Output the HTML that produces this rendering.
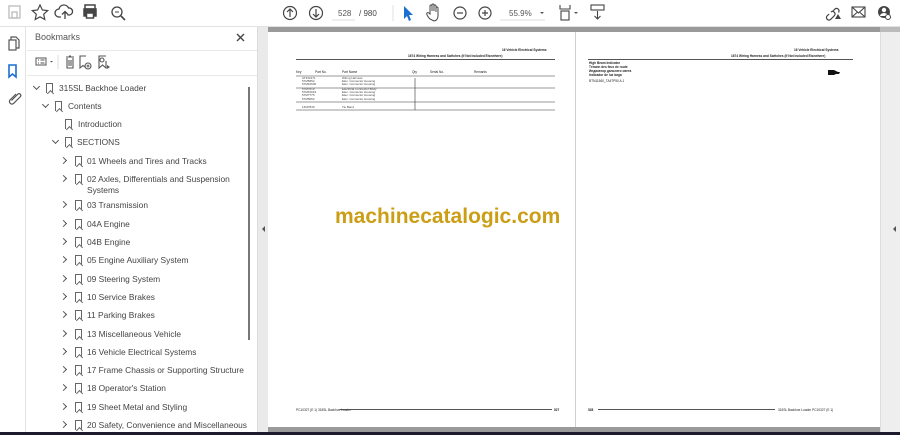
<!DOCTYPE html>
<html><head><meta charset="utf-8"><style>
*{margin:0;padding:0;box-sizing:border-box}
body{width:900px;height:435px;overflow:hidden;background:#fff;font-family:"Liberation Sans",sans-serif;position:relative;color:#333}
.a{position:absolute}
.tb{left:0;top:0;width:900px;height:27px;background:#fff;border-bottom:1px solid #e2e2e2}
.row{position:absolute;font-size:8.4px;color:#444;white-space:nowrap;line-height:10px}
.cr,.cd{position:absolute;width:5px;height:5px;border-right:1.2px solid #555;border-bottom:1.2px solid #555}
.cr{transform:rotate(-45deg)}
.cd{transform:rotate(45deg)}
.bm{position:absolute;width:7px;height:10px;border:1.2px solid #666;border-bottom:none}
.bm:after{content:"";position:absolute;left:0.5px;bottom:-3px;width:4px;height:4px;border-left:1.2px solid #666;border-top:1.2px solid #666;transform:rotate(45deg);background:#fff}
.t{position:absolute;font-size:3.2px;color:#222;white-space:nowrap;font-weight:bold}
</style></head><body>
<div class="a tb"></div>
<svg class="a" style="left:0;top:0" width="900" height="27">
<g fill="none" stroke="#bbb" stroke-width="1.3"><rect x="9" y="6" width="11" height="12"/><rect x="12" y="12" width="5" height="6"/></g>
<path d="M40 5l2.4 5 5.3.6-4 3.6 1.1 5.3-4.8-2.7-4.8 2.7 1.1-5.3-4-3.6 5.3-.6z" fill="none" stroke="#444" stroke-width="1.2"/>
<path d="M61 17h-2a4 4 0 0 1 0-8 5 5 0 0 1 9.5-1 3.5 3.5 0 0 1 1 7h-2M65 19v-7M62 14.5l3-3 3 3" fill="none" stroke="#444" stroke-width="1.3"/>
<g fill="none" stroke="#444" stroke-width="1.5"><rect x="85" y="5" width="10" height="4"/><rect x="84" y="9" width="12" height="7" fill="#444"/><rect x="86.5" y="13" width="7" height="5" fill="#fff"/></g>
<circle cx="117" cy="12" r="5" fill="none" stroke="#444" stroke-width="1.3"/><path d="M121 16l4 4" stroke="#444" stroke-width="1.6"/><path d="M115 12h4" stroke="#444"/>
<circle cx="290" cy="13" r="6.5" fill="none" stroke="#444" stroke-width="1.2"/><path d="M290 17v-8M287 12l3-3 3 3" fill="none" stroke="#444" stroke-width="1.2"/>
<circle cx="316" cy="13" r="6.5" fill="none" stroke="#444" stroke-width="1.2"/><path d="M316 9v8M313 14l3 3 3-3" fill="none" stroke="#444" stroke-width="1.2"/>
<path d="M332 20h23" stroke="#ddd"/>
<text x="338" y="16" font-size="8" fill="#555" font-family="Liberation Sans">528</text>
<text x="359" y="16" font-size="8" fill="#444" font-family="Liberation Sans">/ 980</text>
<path d="M393 5v16" stroke="#e0e0e0"/>
<path d="M404 6v13l3-3 2 5 2-1-2-5h4z" fill="#1a6fd1"/>
<path d="M430 19c-2-2-4-5-3-6s2 0 3 1v-8a1 1 0 0 1 2 0v5-6a1 1 0 0 1 2 0v6-5a1 1 0 0 1 2 0v6-4a1 1 0 0 1 2 0v8c0 3-2 5-4 5z" fill="none" stroke="#444" stroke-width="1"/>
<circle cx="460" cy="13" r="6" fill="none" stroke="#444" stroke-width="1.2"/><path d="M457 13h6" stroke="#444" stroke-width="1.2"/>
<circle cx="485" cy="13" r="6" fill="none" stroke="#444" stroke-width="1.2"/><path d="M482 13h6M485 10v6" stroke="#444" stroke-width="1.2"/>
<text x="509" y="16" font-size="8" fill="#555" font-family="Liberation Sans">55.9%</text>
<path d="M540 12l2 2 2-2z" fill="#555"/><path d="M500 20h45" stroke="#ddd"/>
<g fill="none" stroke="#444" stroke-width="1.1"><path d="M560 5v4h10V5"/><rect x="561" y="11" width="8" height="9"/></g><path d="M574 12l2 2 2-2z" fill="#555"/>
<g fill="none" stroke="#444" stroke-width="1.1"><rect x="591" y="5" width="13" height="5"/><path d="M597.5 11v8M594.5 16l3 3 3-3"/></g>
<g fill="none" stroke="#444" stroke-width="1.2"><path d="M829 14l-2 2a2.5 2.5 0 0 0 3.5 3.5l4-4a2.5 2.5 0 0 0-3.5-3.5M833 11l2-2a2.5 2.5 0 0 1 3.5 3.5"/></g><path d="M835 19l3-5 3 5z" fill="#444"/>
<g fill="none" stroke="#444" stroke-width="1.1"><rect x="852" y="7" width="13" height="10"/><path d="M852 7l6.5 6 6.5-6M852 17l5-4.5M865 17l-5-4.5"/></g>
<circle cx="884" cy="12" r="6" fill="#444"/><circle cx="884" cy="10" r="2.2" fill="#fff"/><path d="M880 16a4 3 0 0 1 8 0" fill="#fff"/><circle cx="888" cy="17" r="2.5" fill="#fff" stroke="#444"/>
</svg>
<div class="a" style="left:0;top:27px;width:26px;height:408px;background:#fff;border-right:1px solid #e3e3e3"></div>
<svg class="a" style="left:0;top:27px" width="26" height="90">
<g fill="none" stroke="#555" stroke-width="1.2"><rect x="9" y="13" width="7" height="10"/><path d="M11 13V10h5l3 3v8h-3"/></g>
<path d="M9 38h7v12l-3.5-3-3.5 3z" fill="none" stroke="#1a6fd1" stroke-width="1.6"/>
<path d="M16 67l-6 6a2.5 2.5 0 0 0 3.5 3.5l7-7a1.8 1.8 0 0 0-2.5-2.5l-6.5 6.5" fill="none" stroke="#555" stroke-width="1.2"/>
</svg>
<div class="a" style="left:35px;top:32px;font-size:9px;color:#555">Bookmarks</div>
<svg class="a" style="left:235px;top:32px" width="12" height="12"><path d="M2 2l7 7M9 2l-7 7" stroke="#444" stroke-width="1.4"/></svg>
<div class="a" style="left:27px;top:50px;width:230px;height:1px;background:#e8e8e8"></div>
<svg class="a" style="left:30px;top:52px" width="100" height="20">
<g fill="none" stroke="#555" stroke-width="1"><rect x="6" y="6" width="10" height="7"/><path d="M8 8h1M8 11h1M10.5 8h4M10.5 11h4"/></g><path d="M20 9l1.5 1.5 1.5-1.5z" fill="#555"/>
<path d="M28 3v14" stroke="#ddd"/>
<g fill="none" stroke="#555" stroke-width="1.1"><path d="M36 5h8M39 4h2M37 6v10h6V6M39 8v6M41 8v6"/><path d="M56 4h-6v12l3-2.5 2 1.6"/><circle cx="58" cy="14" r="3"/><path d="M56.5 14h3M58 12.5v3"/><path d="M76 4h-7v12l3.5-3 3.5 3V9"/><circle cx="72" cy="8" r="2"/></g><path d="M77 13l3 2-3 2z" fill="#555"/>
</svg>
<div class="a" style="left:27px;top:75px;width:230px;height:1px;background:#e8e8e8"></div>
<div class="a" style="left:248px;top:87px;width:2px;height:253px;background:#777"></div>
<div class="a" style="left:257px;top:27px;width:11px;height:408px;background:#eaeaea;border-left:1px solid #dcdcdc"></div>
<div class="a" style="left:262px;top:226px;width:0;height:0;border:3px solid transparent;border-right:3px solid #555;border-left:0"></div>

<div class="cd" style="left:34px;top:84px"></div><div class="bm" style="left:46px;top:83px"></div><div class="row" style="left:59px;top:83px">315SL Backhoe Loader</div>
<div class="cd" style="left:43px;top:102px"></div><div class="bm" style="left:55px;top:101px"></div><div class="row" style="left:68px;top:101px">Contents</div>
<div class="bm" style="left:65px;top:119px"></div><div class="row" style="left:78px;top:119px">Introduction</div>
<div class="cd" style="left:53px;top:138px"></div><div class="bm" style="left:65px;top:137px"></div><div class="row" style="left:77px;top:137px">SECTIONS</div>

<div class="cr" style="left:61px;top:158px"></div><div class="bm" style="left:75px;top:156px"></div><div class="row" style="left:87px;top:156px">01 Wheels and Tires and Tracks</div>
<div class="cr" style="left:61px;top:176px"></div><div class="bm" style="left:75px;top:174px"></div><div class="row" style="left:87px;top:174px">02 Axles, Differentials and Suspension<br><span style="line-height:12px">Systems</span></div>
<div class="cr" style="left:61px;top:202px"></div><div class="bm" style="left:75px;top:200px"></div><div class="row" style="left:87px;top:200px">03 Transmission</div>
<div class="cr" style="left:61px;top:221px"></div><div class="bm" style="left:75px;top:219px"></div><div class="row" style="left:87px;top:219px">04A Engine</div>
<div class="cr" style="left:61px;top:239px"></div><div class="bm" style="left:75px;top:237px"></div><div class="row" style="left:87px;top:237px">04B Engine</div>
<div class="cr" style="left:61px;top:257px"></div><div class="bm" style="left:75px;top:255px"></div><div class="row" style="left:87px;top:255px">05 Engine Auxiliary System</div>
<div class="cr" style="left:61px;top:276px"></div><div class="bm" style="left:75px;top:274px"></div><div class="row" style="left:87px;top:274px">09 Steering System</div>
<div class="cr" style="left:61px;top:294px"></div><div class="bm" style="left:75px;top:292px"></div><div class="row" style="left:87px;top:292px">10 Service Brakes</div>
<div class="cr" style="left:61px;top:312px"></div><div class="bm" style="left:75px;top:310px"></div><div class="row" style="left:87px;top:310px">11 Parking Brakes</div>
<div class="cr" style="left:61px;top:331px"></div><div class="bm" style="left:75px;top:329px"></div><div class="row" style="left:87px;top:329px">13 Miscellaneous Vehicle</div>
<div class="cr" style="left:61px;top:349px"></div><div class="bm" style="left:75px;top:347px"></div><div class="row" style="left:87px;top:347px">16 Vehicle Electrical Systems</div>
<div class="cr" style="left:61px;top:367px"></div><div class="bm" style="left:75px;top:365px"></div><div class="row" style="left:87px;top:365px">17 Frame Chassis or Supporting Structure</div>
<div class="cr" style="left:61px;top:385px"></div><div class="bm" style="left:75px;top:383px"></div><div class="row" style="left:87px;top:383px">18 Operator's Station</div>
<div class="cr" style="left:61px;top:404px"></div><div class="bm" style="left:75px;top:402px"></div><div class="row" style="left:87px;top:402px">19 Sheet Metal and Styling</div>
<div class="cr" style="left:61px;top:422px"></div><div class="bm" style="left:75px;top:420px"></div><div class="row" style="left:87px;top:420px">20 Safety, Convenience and Miscellaneous</div>

<div class="a" style="left:268px;top:27px;width:612px;height:5px;background:#9a9a9a"></div>
<div class="a" style="left:268px;top:427px;width:612px;height:5px;background:#9a9a9a"></div>
<div class="a" style="left:880px;top:27px;width:20px;height:405px;background:#eeeeee;border-left:1px solid #ddd"></div>
<div class="a" style="left:880px;top:27px;width:20px;height:5px;background:#bbb"></div>
<div class="a" style="left:893px;top:226px;width:0;height:0;border:3px solid transparent;border-right:3px solid #555;border-left:0"></div>
<div class="a" style="left:575px;top:32px;width:1px;height:395px;background:#d0d0d0"></div>
<div class="a" style="left:0;top:432px;width:900px;height:3px;background:#1e1a2e"></div>

<div class="t" style="left:502px;top:48px">16 Vehicle Electrical Systems</div>
<div class="t" style="left:408px;top:54px">1674 Wiring Harness and Switches (If Not Included Elsewhere)</div>
<div class="a" style="left:296px;top:59px;width:259px;height:1px;background:#555"></div>
<div class="t" style="left:296px;top:70px;font-weight:normal">Key</div><div class="t" style="left:315px;top:70px;font-weight:normal">Part No.</div><div class="t" style="left:342px;top:70px;font-weight:normal">Part Name</div><div class="t" style="left:412px;top:70px;font-weight:normal">Qty</div><div class="t" style="left:430px;top:70px;font-weight:normal">Serial No.</div><div class="t" style="left:474px;top:70px;font-weight:normal">Remarks</div>
<svg class="a" style="left:296px;top:75px" width="260" height="36"><g stroke="#333" stroke-width="0.6"><path d="M0 1h259M0 13h259M0 27h259M0 35h259M119 3v32"/></g>
<g fill="#444" font-size="3" font-family="Liberation Sans"><text x="6" y="4">AT432171</text><text x="6" y="7">57M5652</text><text x="6" y="10">57M10630</text><text x="6" y="15">57M7619</text><text x="6" y="18">57M10619</text><text x="6" y="21">57M7775</text><text x="6" y="25">57M5652</text><text x="6" y="33">14M7849</text>
<text x="46" y="4">Wiring Harness</text><text x="46" y="7">Elec. Connector Housing</text><text x="46" y="10">Elec. Connector Housing</text><text x="46" y="15">Electrical Connector Body</text><text x="46" y="18">Elec. Connector Housing</text><text x="46" y="21">Elec. Connector Housing</text><text x="46" y="25">Elec. Connector Housing</text><text x="46" y="33">Tie Band</text></g></svg>
<div class="t" style="left:296px;top:408px;font-weight:normal">PC10327 (E 1) 315SL Backhoe Loader</div>
<div class="t" style="left:554px;top:408px">527</div>
<div class="a" style="left:340px;top:409px;width:212px;height:1px;background:#555"></div>

<div class="t" style="left:794px;top:48px">16 Vehicle Electrical Systems</div>
<div class="t" style="left:731px;top:54px">1674 Wiring Harness and Switches (If Not Included Elsewhere)</div>
<div class="a" style="left:588px;top:59px;width:265px;height:1px;background:#555"></div>
<div class="t" style="left:589px;top:61px;line-height:4px">High Beam Indicator<br>Témoin des feux de route<br>Индикатор дальнего света<br>Indicador de luz larga</div>
<div class="t" style="left:589px;top:79px;font-weight:normal">BTN11560_TAII7P50 A.1</div>
<svg class="a" style="left:827px;top:69px" width="14" height="7"><path d="M1 1h6l4 2h2l-1 2h-3l-2 1H1z" fill="#111"/></svg>
<div class="t" style="left:588px;top:408px">528</div>
<div class="a" style="left:598px;top:409px;width:177px;height:1px;background:#555"></div>
<div class="t" style="left:778px;top:408px;font-weight:normal">315SL Backhoe Loader PC10327 (E 1)</div>

<div class="a" style="left:335px;top:205px;font-size:21px;font-weight:bold;color:#cc9e16;white-space:nowrap">machinecatalogic.com</div>
</body></html>
